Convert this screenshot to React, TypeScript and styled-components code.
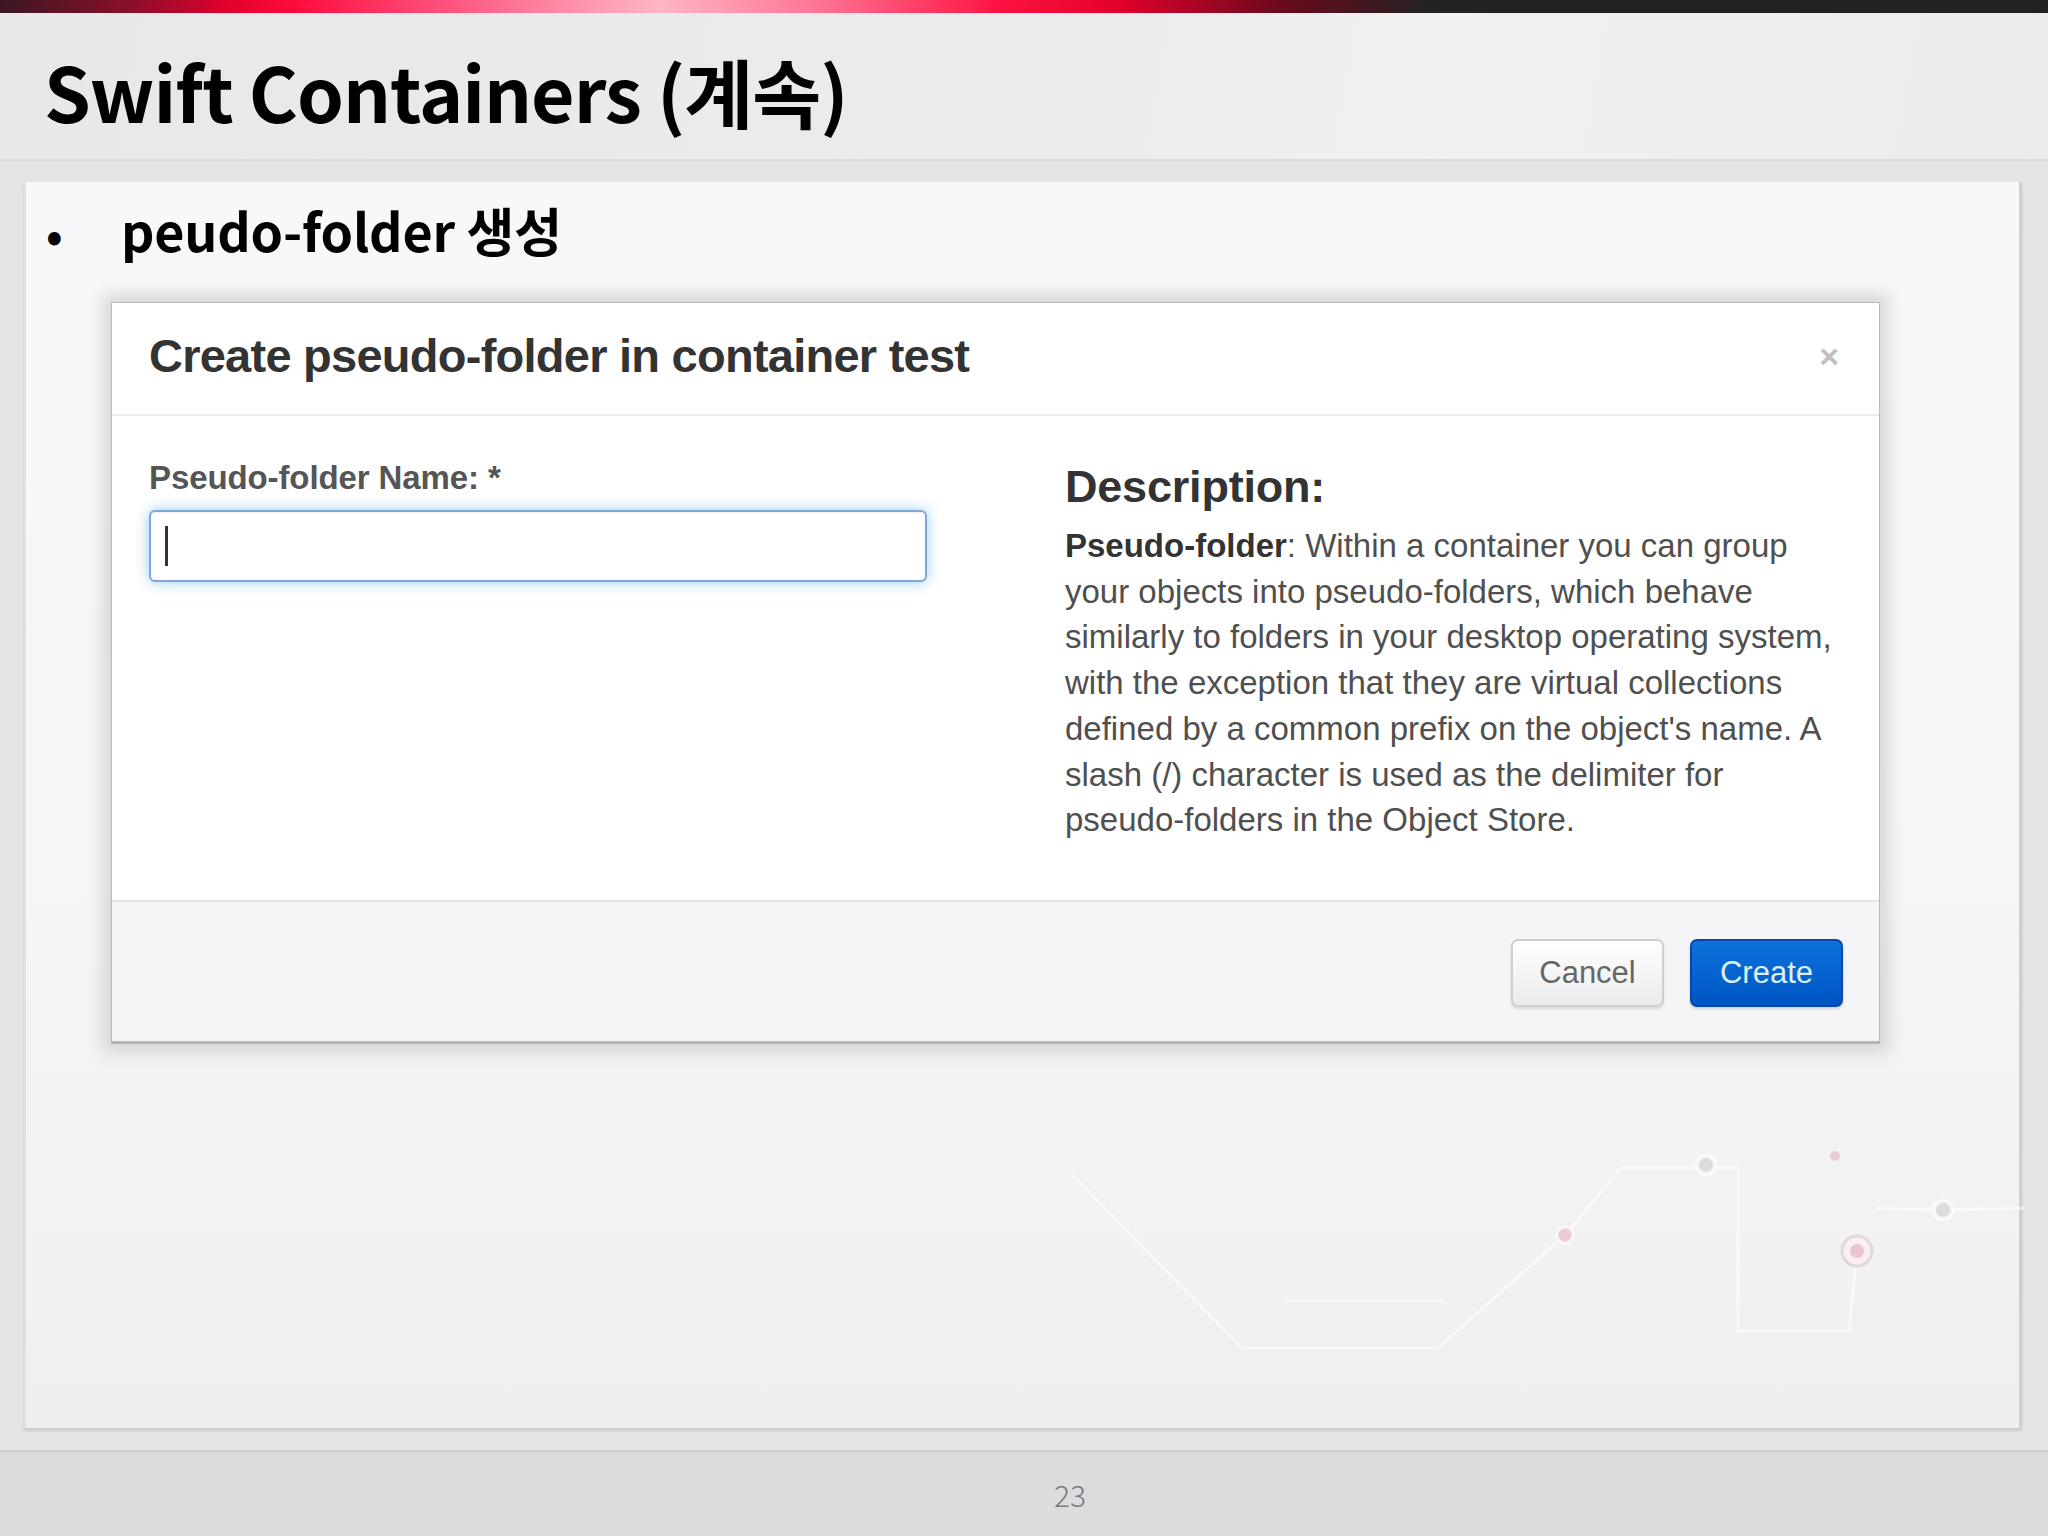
import React from 'react';
import styled, { createGlobalStyle } from 'styled-components';

const GlobalStyle = createGlobalStyle`
  html, body {
    margin: 0;
    padding: 0;
    background: #e6e5e8;
  }
  * {
    box-sizing: border-box;
  }
`;

const descriptionLines = [
  'your objects into pseudo-folders, which behave',
  'similarly to folders in your desktop operating system,',
  'with the exception that they are virtual collections',
  "defined by a common prefix on the object's name. A",
  'slash (/) character is used as the delimiter for',
  'pseudo-folders in the Object Store.',
];

function CircuitDecoration() {
  return (
    <Decoration width="1998" height="1246" viewBox="0 0 1998 1246">
      <g fill="none" stroke="#ffffff" strokeOpacity="0.55" strokeWidth="3" strokeLinejoin="round">
        <path d="M1046 993 L1216 1166 L1412 1166 L1539 1053 L1595 986 L1712 986 L1712 1149 L1823 1149 L1831 1069" />
        <path d="M1849 1026 L1917 1028 L1998 1026" />
        <path d="M1255 1119 L1419 1119" strokeOpacity="0.4" />
      </g>
      <circle cx="1680" cy="983" r="9" fill="#dcdbe0" stroke="#fff" strokeOpacity="0.7" strokeWidth="4" />
      <circle cx="1917" cy="1028" r="9" fill="#dcdbe0" stroke="#fff" strokeOpacity="0.7" strokeWidth="4" />
      <circle cx="1539" cy="1053" r="8" fill="#ecc9d3" stroke="#fff" strokeOpacity="0.7" strokeWidth="3" />
      <circle cx="1809" cy="974" r="5" fill="#e8ccd4" />
      <circle cx="1831" cy="1069" r="15" fill="#faeef1" stroke="#e2d8dc" strokeWidth="3" />
      <circle cx="1831" cy="1069" r="7" fill="#ebc4ce" />
    </Decoration>
  );
}

export default function App() {
  return (
    <>
      <GlobalStyle />
      <Slide>
        <TopBar />
        <Header>
          <SlideTitle>Swift Containers (계속)</SlideTitle>
        </Header>
        <Main>
          <Panel>
            <CircuitDecoration />
            <BulletRow>
              <Bullet>•</Bullet>
              <BulletText>peudo-folder 생성</BulletText>
            </BulletRow>

            <Modal>
              <ModalHeader>
                <ModalTitle>Create pseudo-folder in container test</ModalTitle>
                <CloseButton>×</CloseButton>
              </ModalHeader>

              <ModalBody>
                <FormColumn>
                  <FieldLabel>Pseudo-folder Name: *</FieldLabel>
                  <TextField>
                    <Caret />
                  </TextField>
                </FormColumn>
                <HelpColumn>
                  <HelpHeading>Description:</HelpHeading>
                  <HelpText>
                    <strong>Pseudo-folder</strong>: Within a container you can group
                    {descriptionLines.map((line) => (
                      <React.Fragment key={line}>
                        <br />
                        {line}
                      </React.Fragment>
                    ))}
                  </HelpText>
                </HelpColumn>
              </ModalBody>

              <ModalFooter>
                <Button>Cancel</Button>
                <Button primary>Create</Button>
              </ModalFooter>
            </Modal>
          </Panel>
        </Main>
        <PageFooter>
          <PageNumber>23</PageNumber>
        </PageFooter>
      </Slide>
    </>
  );
}

const Slide = styled.div`
  display: flex;
  flex-direction: column;
  width: 2048px;
  height: 1536px;
  overflow: hidden;
  background: #e5e4e7;
`;

const TopBar = styled.div`
  height: 13px;
  flex-shrink: 0;
  background: linear-gradient(
    90deg,
    #3a1820 0,
    #8a0f2a 130px,
    #e3002d 230px,
    #ff0a3a 290px,
    #ff3d6c 400px,
    #ff8aa6 560px,
    #ffb6c6 660px,
    #ff7494 820px,
    #ff1242 1000px,
    #e2002c 1120px,
    #6a0a1c 1280px,
    #222222 1430px,
    #222222 100%
  );
`;

const Header = styled.header`
  height: 148px;
  flex-shrink: 0;
  padding: 40px 0 0 44px;
  background: linear-gradient(100deg, #e8e8ea 0%, #ececee 55%, #f1f1f3 70%, #ebebed 100%);
  border-bottom: 2px solid #dcdcdf;
`;

const SlideTitle = styled.h1`
  margin: 0;
  font-family: 'Noto Sans CJK KR', 'Noto Sans', sans-serif;
  font-size: 75px;
  font-weight: 700;
  line-height: 1;
  color: #000;
  letter-spacing: -1px;
`;

const Main = styled.main`
  padding: 21px 26px 0 24px;
  flex-shrink: 0;
`;

const Panel = styled.section`
  position: relative;
  height: 1246px;
  padding: 22px 0 0 0;
  background: linear-gradient(180deg, #f8f8fa 0%, #f6f6f8 55%, #efeff1 100%);
  border-left: 2px solid #e1e1e4;
  border-right: 3px solid #cfcfd3;
  box-shadow: 0 3px 3px rgba(0, 0, 0, 0.12);
`;

const Decoration = styled.svg`
  position: absolute;
  left: 0;
  top: 0;
  pointer-events: none;
`;

const BulletRow = styled.div`
  display: flex;
  align-items: baseline;
  font-family: 'Noto Sans CJK KR', 'Noto Sans', sans-serif;
  font-weight: 700;
  line-height: 1;
  color: #000;
`;

const Bullet = styled.span`
  width: 95px;
  padding-left: 20px;
  font-size: 44px;
`;

const BulletText = styled.span`
  font-size: 52px;
  letter-spacing: -0.2px;
`;

const Modal = styled.div`
  position: relative;
  z-index: 1;
  display: flex;
  flex-direction: column;
  width: 1769px;
  height: 742px;
  margin: 46px 0 0 85px;
  background: #fff;
  border: 1px solid #b9b9bc;
  border-bottom: 3px solid #b5b5b8;
  box-shadow: 0 0 16px 9px rgba(0, 0, 0, 0.12);
  font-family: 'Liberation Sans', Arial, sans-serif;
`;

const ModalHeader = styled.div`
  display: flex;
  align-items: center;
  justify-content: space-between;
  height: 113px;
  padding: 0 40px 6px 37px;
  border-bottom: 2px solid #ededed;
`;

const ModalTitle = styled.h3`
  margin: 0;
  font-size: 47px;
  font-weight: 700;
  line-height: 1;
  letter-spacing: -0.75px;
  color: #333;
`;

const CloseButton = styled.span`
  font-size: 34px;
  font-weight: 700;
  line-height: 1;
  color: #c0c0c0;
`;

const ModalBody = styled.div`
  flex: 1;
  display: grid;
  grid-template-columns: 778px 1fr;
  column-gap: 138px;
  padding: 42px 37px 0 37px;
`;

const FormColumn = styled.div`
  display: flex;
  flex-direction: column;
`;

const FieldLabel = styled.label`
  font-size: 33px;
  font-weight: 700;
  line-height: 40px;
  color: #555;
  letter-spacing: -0.1px;
`;

const TextField = styled.div`
  display: flex;
  align-items: center;
  height: 72px;
  margin-top: 12px;
  padding-left: 14px;
  background: #fff;
  border: 2px solid #7fa8d6;
  border-radius: 6px;
  box-shadow: inset 0 1px 2px rgba(0, 0, 0, 0.08), 0 0 14px rgba(82, 168, 236, 0.6);
`;

const Caret = styled.span`
  width: 3px;
  height: 40px;
  background: #333;
`;

const HelpColumn = styled.div`
  padding-top: 2px;
`;

const HelpHeading = styled.h4`
  margin: 0;
  font-size: 45px;
  font-weight: 700;
  line-height: 54px;
  letter-spacing: -0.2px;
  color: #333;
`;

const HelpText = styled.p`
  margin: 9px 0 0;
  font-size: 33px;
  line-height: 45.7px;
  color: #4f4f4f;

  strong {
    color: #333;
  }
`;

const ModalFooter = styled.div`
  display: flex;
  align-items: center;
  justify-content: flex-end;
  gap: 26px;
  height: 141px;
  padding: 2px 36px 0 0;
  background: #f5f5f7;
  border-top: 2px solid #e3e3e6;
`;

const Button = styled.button<{ primary?: boolean }>`
  width: 153px;
  height: 68px;
  padding: 0;
  font-family: 'Liberation Sans', Arial, sans-serif;
  font-size: 31px;
  border-radius: 7px;
  color: ${({ primary }) => (primary ? '#dcefff' : '#666')};
  border: 2px solid ${({ primary }) => (primary ? '#0847a8' : '#cfcfd2')};
  background: ${({ primary }) =>
    primary
      ? 'linear-gradient(180deg, #0b72dc 0%, #0055c3 100%)'
      : 'linear-gradient(180deg, #ffffff 0%, #ebebed 100%)'};
  box-shadow: ${({ primary }) =>
    primary ? '0 2px 3px rgba(0, 0, 0, 0.15)' : '0 2px 3px rgba(0, 0, 0, 0.12)'};
`;

const PageFooter = styled.footer`
  flex: 1;
  display: flex;
  align-items: center;
  margin-top: 22px;
  padding-left: 1054px;
  background: #dcdbde;
  border-top: 2px solid #d0cfd3;
`;

const PageNumber = styled.span`
  font-family: 'Noto Sans CJK KR', 'Noto Sans', sans-serif;
  font-weight: 300;
  font-size: 30px;
  color: #7a7a7c;
`;
